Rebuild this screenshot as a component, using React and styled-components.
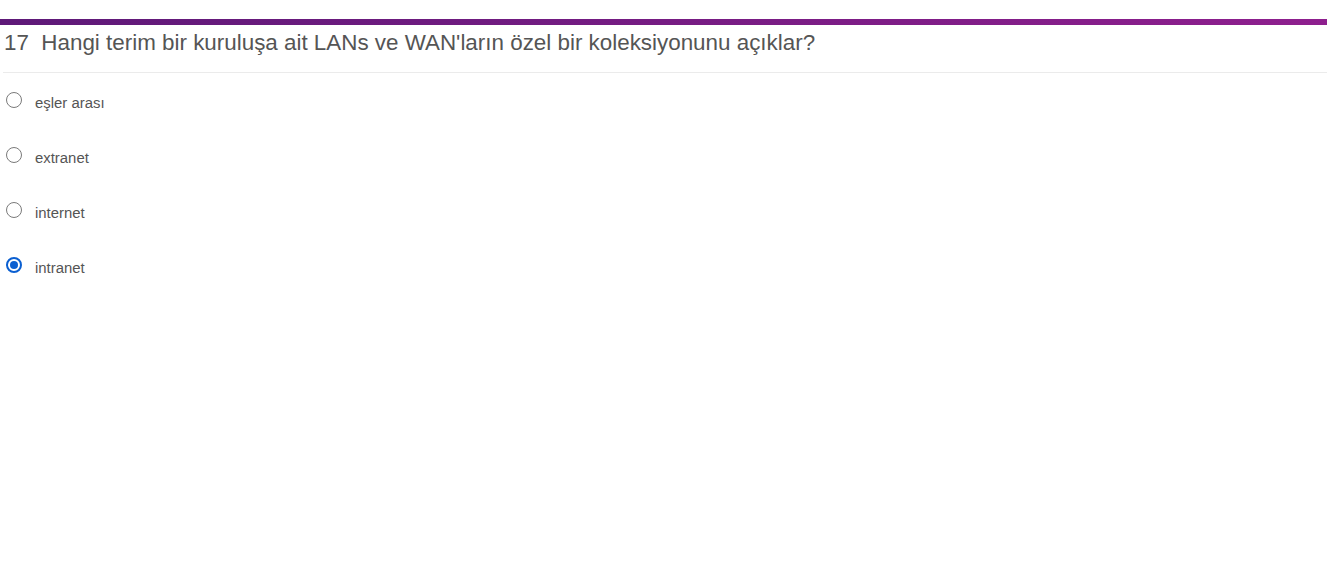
import React, { useState } from 'react'
import styled, { createGlobalStyle } from 'styled-components'

const GlobalStyle = createGlobalStyle`
    html, body {
        margin: 0;
        padding: 0;
        background: #fff;
    }
    body {
        font-family: "Liberation Sans", Arial, sans-serif;
    }
`

const Page = styled.div`
    padding: 19px 0 0 0;
`

const TopBar = styled.div`
    height: 6px;
    background: linear-gradient(90deg, #5e1978 0%, #8e1f8e 100%);
`

const Title = styled.h2`
    margin: 0;
    padding: 3px 0 0 4px;
    font-size: 22.4px;
    font-weight: normal;
    line-height: 30px;
    color: #555;
`

const Divider = styled.div`
    margin: 14px 0 0 3px;
    height: 1px;
    background: #ebebeb;
`

const Options = styled.div`
    display: flex;
    flex-direction: column;
    padding: 20px 0 0 6px;
    gap: 37px;
`

const Option = styled.label`
    display: flex;
    align-items: center;
    height: 18px;
    gap: 13px;
    cursor: pointer;
`

const Circle = styled.span`
    box-sizing: border-box;
    width: 16px;
    height: 16px;
    border-radius: 50%;
    border: ${p => p.checked ? '2px solid #0a5fd1' : '1px solid #7a7a7a'};
    display: flex;
    align-items: center;
    justify-content: center;
    background: #fff;
    margin-top: -4px;
    &::after {
        content: '';
        width: 8px;
        height: 8px;
        border-radius: 50%;
        background: #0a5fd1;
        display: ${p => p.checked ? 'block' : 'none'};
    }
`

const Label = styled.span`
    font-size: 14.9px;
    color: #555;
    margin-top: 2px;
`

const answers = ['eşler arası', 'extranet', 'internet', 'intranet']

export default function App() {
    const [selected, setSelected] = useState(3)
    return (
        <>
            <GlobalStyle />
            <Page>
                <TopBar />
                <Title>17&nbsp; Hangi terim bir kuruluşa ait LANs ve WAN'ların özel bir koleksiyonunu açıklar?</Title>
                <Divider />
                <Options>
                    {answers.map((a, i) => (
                        <Option key={i} onClick={() => setSelected(i)}>
                            <Circle checked={selected === i} />
                            <Label>{a}</Label>
                        </Option>
                    ))}
                </Options>
            </Page>
        </>
    )
}
